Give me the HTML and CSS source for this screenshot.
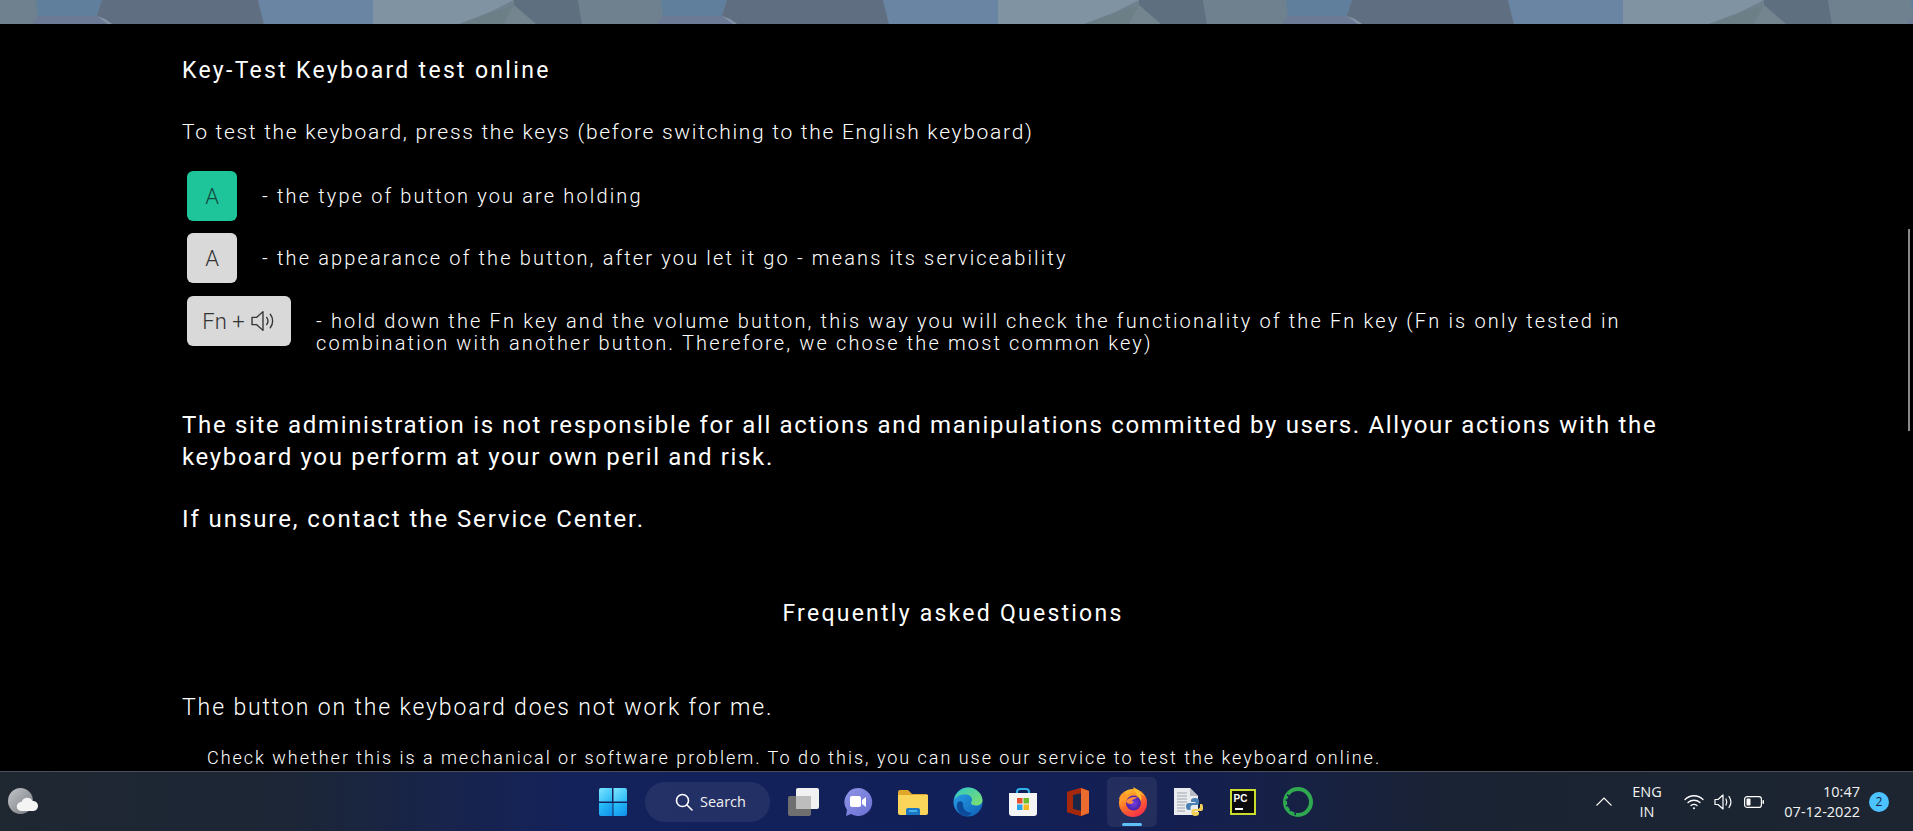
FILE: index.html
```html
<!DOCTYPE html>
<html lang="en">
<head>
<meta charset="utf-8">
<title>Key-Test Keyboard test online</title>
<link rel="stylesheet" href="styles.css">
</head>
<body>
<div class="screen">
  <svg class="banner" width="100%" height="24" aria-hidden="true">
    <defs>
      <pattern id="poly" width="625" height="24" patternUnits="userSpaceOnUse">
        <rect width="625" height="24" fill="#6f808f"/>
        <polygon points="36,0 102,0 97,16 38,16" fill="#5f7f9c"/>
        <polygon points="38,16 97,16 112,24 32,24" fill="#6c7a95"/>
        <polygon points="102,0 258,0 264,24 112,24 97,16" fill="#5f6e80"/>
        <polygon points="97,16 105,19 112,24 108,24" fill="#8493a6"/>
        <polygon points="258,0 373,0 373,24 264,24" fill="#6a85a3"/>
        <polygon points="373,0 514,0 490,12 459,24 373,24" fill="#8093a3"/>
        <polygon points="514,5 459,24 504,24" fill="#6d7f86"/>
        <polygon points="514,5 504,24 536,24" fill="#74858f"/>
        <polygon points="514,0 578,0 582,24 536,24 514,5" fill="#5e6f7f"/>
        <polygon points="578,0 625,0 625,24 582,24" fill="#6f808f"/>
      </pattern>
    </defs>
    <rect width="100%" height="24" fill="url(#poly)"/>
  </svg>

  <main class="content">
    <h1 class="title">Key-Test Keyboard test online</h1>
    <p class="lead">To test the keyboard, press the keys (before switching to the English keyboard)</p>

    <ul class="legend">
      <li class="legend-row">
        <span class="key key-active">A</span>
        <span class="legend-text">- the type of button you are holding</span>
      </li>
      <li class="legend-row">
        <span class="key">A</span>
        <span class="legend-text">- the appearance of the button, after you let it go - means its serviceability</span>
      </li>
      <li class="legend-row">
        <span class="key key-wide">Fn +
          <svg class="key-speaker" width="25" height="24" viewBox="0 0 24 22" fill="none" stroke="#333" stroke-width="1.300" stroke-linejoin="round" stroke-linecap="round">
            <path d="M1 7.500h4.500L11.500 2v18l-6-5.500H1z"/>
            <path d="M15 7.500c1.500 2 1.500 5 0 7"/>
            <path d="M18.500 4.500c3 3.500 3 9.500 0 13"/>
          </svg>
        </span>
        <span class="legend-text">- hold down the Fn key and the volume button, this way you will check the functionality of the Fn key (Fn is only tested in combination with another button. Therefore, we chose the most common key)</span>
      </li>
    </ul>

    <p class="notice notice-first">The site administration is not responsible for all actions and manipulations committed by users. Allyour actions with the keyboard you perform at your own peril and risk.</p>
    <p class="notice notice-second">If unsure, contact the Service Center.</p>

    <h2 class="faq-title">Frequently asked Questions</h2>
    <h3 class="faq-q">The button on the keyboard does not work for me.</h3>
    <p class="faq-a">Check whether this is a mechanical or software problem. To do this, you can use our service to test the keyboard online.</p>
  </main>

  <div class="scroll-thumb"></div>

  <footer class="taskbar">
    <div class="tb-left">
      <svg width="30" height="30" viewBox="0 0 30 30" aria-hidden="true">
        <defs><linearGradient id="moon" x1="0" y1="0" x2="1" y2="1"><stop offset="0" stop-color="#c4c6ca"/><stop offset="1" stop-color="#74787e"/></linearGradient></defs>
        <ellipse cx="12.500" cy="14" rx="12.500" ry="13" fill="url(#moon)"/>
        <path d="M13 24a4.500 4.500 0 0 1 .5-9 6 6 0 0 1 11-1 5 5 0 0 1 1 10z" fill="#f4f4f4"/>
      </svg>
    </div>

    <div class="tb-center">
      <span class="tile">
        <svg width="30" height="30" viewBox="0 0 30 30" aria-hidden="true">
          <defs>
            <linearGradient id="w1" x1="0" y1="0" x2="1" y2="1"><stop offset="0" stop-color="#7ce4ff"/><stop offset="1" stop-color="#27b8f5"/></linearGradient>
            <linearGradient id="w2" x1="0" y1="0" x2="1" y2="1"><stop offset="0" stop-color="#2bc2fa"/><stop offset="1" stop-color="#0f8fe8"/></linearGradient>
          </defs>
          <path d="M1 3a2 2 0 0 1 2-2h11v13.500H1z" fill="url(#w1)"/>
          <path d="M15.500 1H27a2 2 0 0 1 2 2v11.500H15.500z" fill="url(#w1)"/>
          <path d="M1 16h13.500v13H3a2 2 0 0 1-2-2z" fill="url(#w2)"/>
          <path d="M15.500 16H29v11a2 2 0 0 1-2 2H15.500z" fill="url(#w2)"/>
        </svg>
      </span>

      <span class="search">
        <svg width="18" height="18" viewBox="0 0 18 18" fill="none" stroke="#fff" stroke-width="1.600" stroke-linecap="round" aria-hidden="true">
          <circle cx="7.500" cy="7.500" r="6"/><path d="M12 12l5 5"/>
        </svg>
        <span>Search</span>
      </span>

      <span class="tile">
        <svg width="32" height="30" viewBox="0 0 32 30" aria-hidden="true">
          <rect x="9" y="1" width="23" height="21" rx="2" fill="#f1f1f1"/>
          <rect x="1" y="9" width="23" height="20" rx="2" fill="#6f6f6f"/>
          <rect x="9" y="9" width="15" height="13" fill="#bdbdbd"/>
        </svg>
      </span>

      <span class="tile">
        <svg width="30" height="30" viewBox="0 0 30 30" aria-hidden="true">
          <defs><linearGradient id="chat" x1="0" y1="0" x2="1" y2="1"><stop offset="0" stop-color="#8f96e8"/><stop offset="1" stop-color="#6a6fd2"/></linearGradient></defs>
          <path d="M15 1a14 14 0 1 1-7 26l-5 2 1-6A14 14 0 0 1 15 1z" fill="url(#chat)"/>
          <rect x="7" y="9" width="11" height="11" rx="2" fill="#fff"/>
          <path d="M19 13l4-3v10l-4-3z" fill="#fff"/>
        </svg>
      </span>

      <span class="tile">
        <svg width="32" height="30" viewBox="0 0 32 30" aria-hidden="true">
          <path d="M1 5a2 2 0 0 1 2-2h8l4 4h14a2 2 0 0 1 2 2v6H1z" fill="#e0a82a"/>
          <path d="M1 8h30v18a2 2 0 0 1-2 2H3a2 2 0 0 1-2-2z" fill="#fbd45a"/>
          <path d="M9 23a2 2 0 0 1 2-2h10a2 2 0 0 1 2 2v5H9z" fill="#1a78c4"/>
          <rect x="12" y="23" width="8" height="2" fill="#45aee8"/>
        </svg>
      </span>

      <span class="tile">
        <svg width="30" height="30" viewBox="0 0 30 30" aria-hidden="true">
          <defs>
            <linearGradient id="e1" x1="0" y1="0" x2="1" y2="1"><stop offset="0" stop-color="#2fc8c0"/><stop offset="1" stop-color="#7fe06e"/></linearGradient>
            <linearGradient id="e2" x1="0" y1="0" x2="1" y2="1"><stop offset="0" stop-color="#2aa4e8"/><stop offset="1" stop-color="#0e5fb8"/></linearGradient>
          </defs>
          <circle cx="15" cy="15" r="14.500" fill="url(#e2)"/>
          <path d="M1 13C3 5 9 .5 15 .5c8 0 14.500 6 14.500 13 0 3-3 5-6.500 5-3 0-5-1-5-2.500 0-1 1-1.500 1-3.500 0-3-3-5-7-5-5 0-9 2-11 5.500z" fill="url(#e1)"/>
          <path d="M10 16c-1 6 4 10 9 10-2 3-6 3.500-9 2.500C6 27 3 22 4 17c1-3 4-4 6-1z" fill="#0c4a9a"/>
        </svg>
      </span>

      <span class="tile">
        <svg width="30" height="30" viewBox="0 0 30 30" aria-hidden="true">
          <path d="M9 9V5a3 3 0 0 1 3-3h6a3 3 0 0 1 3 3v4" fill="none" stroke="#2fb2ea" stroke-width="2"/>
          <path d="M1 6h28v20a3 3 0 0 1-3 3H4a3 3 0 0 1-3-3z" fill="#f5f5f5"/>
          <rect x="9" y="11" width="5.500" height="5.500" fill="#e8502f"/>
          <rect x="15.500" y="11" width="5.500" height="5.500" fill="#6cbb2f"/>
          <rect x="9" y="17.500" width="5.500" height="5.500" fill="#2ba3ea"/>
          <rect x="15.500" y="17.500" width="5.500" height="5.500" fill="#f5b81f"/>
        </svg>
      </span>

      <span class="tile">
        <svg width="26" height="30" viewBox="0 0 26 30" aria-hidden="true">
          <path d="M2 5l14-4 8 3v22l-8 3-14-4z" fill="#d83b01"/>
          <path d="M16 1l8 3v22l-8 3z" fill="#eb6c2f"/>
          <path d="M2 5l14-4v5L8 8v14l8 2v5L2 25z" fill="#a5270c"/>
          <path d="M8 8l8-2v18l-8-2z" fill="#1c2748"/>
        </svg>
      </span>

      <span class="tile tile-open">
        <svg width="30" height="30" viewBox="0 0 30 30" aria-hidden="true">
          <defs>
            <linearGradient id="ff1" x1="0.200" y1="0" x2="0.800" y2="1"><stop offset="0" stop-color="#ffcb2d"/><stop offset="0.500" stop-color="#ff6a2b"/><stop offset="1" stop-color="#f5264f"/></linearGradient>
            <radialGradient id="ff2"><stop offset="0" stop-color="#7542e5"/><stop offset="1" stop-color="#4a1fa8"/></radialGradient>
          </defs>
          <circle cx="15" cy="16" r="14" fill="url(#ff1)"/>
          <path d="M15 0c6 3 12 8 14 14 0-2-3-6-7-7 2 3 2 6 0 8-1-5-5-9-7-15z" fill="#ffbd2e"/>
          <path d="M1 12C2 8 5 5 7 5c0 2 1 3 2 3 3-2 6-2 8 0-4 0-7 3-7 6z" fill="#ff9a2b"/>
          <circle cx="15.500" cy="16" r="7.500" fill="url(#ff2)"/>
          <path d="M8 14c3-4 9-5 12-3-3 0-6 2-6 3 3 1 1 2-1 3-3 0-5-1-5-3z" fill="#ff8a3c"/>
        </svg>
        <span class="indicator"></span>
      </span>

      <span class="tile">
        <svg width="30" height="30" viewBox="0 0 30 30" aria-hidden="true">
          <path d="M1 1h16l8 8v19H1z" fill="#e9ebee"/>
          <path d="M17 1l8 8h-8z" fill="#b8bcc2"/>
          <g stroke="#a0a6ad" stroke-width="1"><path d="M4 6h10M4 9h10M4 12h10M4 15h10M4 18h8M4 21h8M4 24h8"/></g>
          <path d="M22 11c-3 0-4 1-4 2.500V15h4.500v1H16c-2 0-3 1-3 3.500s1 3.500 3 3.500h1.500v-2.500c0-1.500 1-2.500 2.500-2.500h4c1 0 2-1 2-2v-2.500c0-1.500-1.500-2.500-4-2.500z" fill="#4a7fb5"/>
          <path d="M22 29c3 0 4-1 4-2.500V25h-4.500v-1H28c2 0 2-1.500 2-4s-1-3-2-3h-1v2.500c0 1.500-1 2.500-2.500 2.500h-4c-1 0-2 1-2 2V26c0 1.500 1.500 3 3.500 3z" fill="#f2cf57"/>
        </svg>
      </span>

      <span class="tile">
        <span class="pycharm"><b class="pycharm-name">PC</b><i class="pycharm-bar"></i></span>
      </span>

      <span class="tile">
        <svg width="32" height="32" viewBox="0 0 32 32" aria-hidden="true">
          <circle cx="16" cy="16" r="13" fill="none" stroke="#2fa84f" stroke-width="4"/>
          <path d="M5 9l2 1M3.500 14l2.500.3M4 20l2.300-.8M8 25l1.500-2M13 29l.5-2.500" stroke="#101f4f" stroke-width="1.500"/>
        </svg>
      </span>
    </div>

    <div class="tb-right">
      <svg class="chevron" width="16" height="9" viewBox="0 0 16 9" fill="none" stroke="#fff" stroke-width="1.100" aria-hidden="true"><path d="M.5 8.500L8 1l7.500 7.500"/></svg>
      <span class="lang"><span>ENG</span><span>IN</span></span>
      <svg class="wifi" width="20" height="16" viewBox="0 0 20 16" fill="none" stroke="#fff" stroke-width="1.300" stroke-linecap="round" aria-hidden="true">
        <path d="M1 5.500c5-5 13-5 18 0"/><path d="M4 8.500c3.500-3 8.500-3 12 0"/><path d="M7 11.500c2-1.500 4-1.500 6 0"/><circle cx="10" cy="14.300" r="1" fill="#fff" stroke="none"/>
      </svg>
      <svg class="volume" width="20" height="18" viewBox="0 0 20 18" fill="none" stroke="#fff" stroke-width="1.200" stroke-linejoin="round" stroke-linecap="round" aria-hidden="true">
        <path d="M1 6.500h3L9 2v14l-5-4.500H1z"/><path d="M12 6c1 2 1 4 0 6"/><path d="M15 3.500c2.500 3.500 2.500 7.500 0 11"/>
      </svg>
      <svg class="battery" width="20" height="12" viewBox="0 0 20 12" aria-hidden="true">
        <rect x=".6" y=".6" width="16.800" height="10.800" rx="2.500" fill="none" stroke="#fff" stroke-width="1.200"/>
        <rect x="2.500" y="2.500" width="4" height="7" rx="1" fill="#fff"/>
        <rect x="18.500" y="4" width="1.500" height="4" rx=".7" fill="#fff"/>
      </svg>
      <span class="clock"><span>10:47</span><span>07-12-2022</span></span>
      <span class="badge">2</span>
    </div>
  </footer>
</div>
</body>
</html>
```

FILE: styles.css
```css
* { box-sizing: border-box; }
html, body { margin: 0; padding: 0; height: 100%; background: #000; overflow: hidden; }

.screen {
  position: relative;
  height: 831px;
  display: flex;
  flex-direction: column;
  overflow: hidden;
  font-family: Roboto, "Liberation Sans", sans-serif;
  color: #fff;
}

.banner { display: block; flex: 0 0 24px; }

.content {
  flex: 1 1 0;
  min-height: 0;
  overflow: hidden;
  padding: 31px 189px 0 182px;
  background: #000;
}

.title, .lead, .notice, .faq-title, .faq-q, .faq-a { margin: 0; font-weight: 400; }

.title { font-size: 23px; line-height: 32px; letter-spacing: 2.3px; color: #fff; }
.lead { margin-top: 29px; font-size: 21px; font-weight: 300; line-height: 32px; letter-spacing: 1.7px; color: #fff; }

.legend { list-style: none; margin: 23px 0 0; padding: 0; display: flex; flex-direction: column; gap: 12px; }
.legend-row { display: flex; align-items: flex-start; gap: 25px; padding-left: 5px; }
.legend-row:last-child { margin-top: 1px; }
.legend-text { flex: 1; padding-top: 14px; font-size: 20px; font-weight: 300; line-height: 22px; letter-spacing: 2.15px; color: #fff; }

.key {
  flex: none;
  display: flex;
  align-items: center;
  justify-content: center;
  width: 50px;
  height: 50px;
  border-radius: 6px;
  background: #d9d9d9;
  color: #333;
  font-size: 22px;
  font-weight: 300;
}
.key-active { background: #1fc59a; color: #124a3e; }
.key-wide { width: 104px; gap: 6px; }
.key-speaker { display: block; }

.notice { font-size: 24px; line-height: 32px; letter-spacing: 1.67px; color: #fff; }
.notice-first { margin-top: 55px; }
.notice-second { margin-top: 30px; letter-spacing: 1.92px; }

.faq-title { margin-top: 63px; text-align: center; font-size: 23px; line-height: 32px; letter-spacing: 2.25px; }
.faq-q { margin-top: 62px; font-size: 23px; font-weight: 300; line-height: 32px; letter-spacing: 1.88px; color: #fff; }
.faq-a { margin-top: 18px; padding-left: 25px; font-size: 18px; font-weight: 300; line-height: 32px; letter-spacing: 1.98px; color: #fff; }

.scroll-thumb {
  position: absolute;
  top: 229px;
  right: 3px;
  width: 2px;
  height: 202px;
  background: #8a8a8a;
}

.taskbar {
  flex: 0 0 60px;
  display: grid;
  grid-template-columns: 585px 740px 1fr;
  align-items: center;
  border-top: 1px solid #4a4e57;
  background: linear-gradient(90deg, #1f2731 0, #1c2636 15%, #14225c 30%, #12205a 50%, #141f50 62%, #1a2333 76%, #1c2530 100%);
  font-family: "Open Sans", "Liberation Sans", sans-serif;
}

.tb-left { padding-left: 8px; display: flex; }
.tb-left svg { display: block; }

.tb-center { display: flex; align-items: center; height: 59px; }

.tile {
  position: relative;
  flex: 0 0 55px;
  height: 50px;
  display: flex;
  align-items: center;
  justify-content: center;
}
.tile-open::before {
  content: "";
  position: absolute;
  inset: 0 3px 0 2px;
  border-radius: 6px;
  background: rgba(255, 255, 255, .07);
}
.tile svg { position: relative; display: block; }

.indicator {
  position: absolute;
  left: 17px;
  bottom: 1px;
  width: 20px;
  height: 3px;
  border-radius: 2px;
  background: #5cc0f5;
}

.search {
  flex: 0 0 125px;
  height: 40px;
  margin: 0 5px;
  display: flex;
  align-items: center;
  gap: 7px;
  padding-left: 30px;
  border-radius: 20px;
  background: rgba(255, 255, 255, .07);
  font-size: 14.500px;
  color: #f2f2f2;
}

.pycharm {
  position: relative;
  display: block;
  width: 26px;
  height: 26px;
  background: #0b0b0b;
  border: 2px solid #c9dd2a;
  color: #fff;
}
.pycharm-name { position: absolute; left: 2px; top: 2px; font-family: "Liberation Sans", sans-serif; font-size: 10px; line-height: 11px; font-weight: 700; }
.pycharm-bar { position: absolute; left: 3px; bottom: 3px; width: 8px; height: 1.500px; background: #fff; }

.tb-right { display: flex; align-items: center; height: 59px; padding-left: 271px; font-size: 14.500px; color: #f2f2f2; }
.chevron { display: block; flex: none; }
.lang { display: flex; flex-direction: column; align-items: center; width: 30px; margin-left: 20px; line-height: 20px; }
.wifi { display: block; flex: none; margin-left: 22px; }
.volume { display: block; flex: none; margin-left: 10px; }
.battery { display: block; flex: none; margin-left: 10px; }
.clock { display: flex; flex-direction: column; align-items: flex-end; width: 96px; line-height: 20px; white-space: nowrap; }
.badge {
  flex: none;
  display: flex;
  align-items: center;
  justify-content: center;
  width: 20px;
  height: 20px;
  margin-left: 9px;
  border-radius: 50%;
  background: #4cc2ff;
  color: #10233a;
  font-size: 12px;
}
```
